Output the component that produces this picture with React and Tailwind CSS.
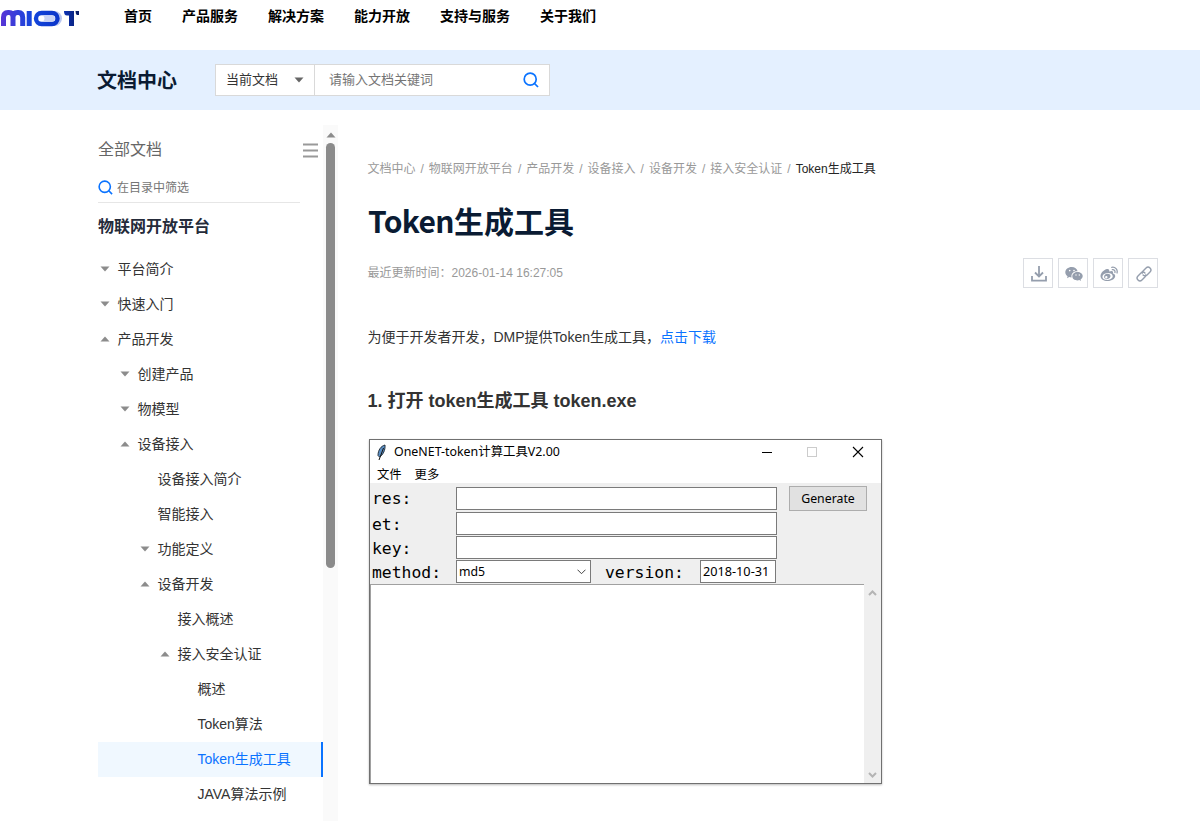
import React from 'react';

const NAV = ['首页', '产品服务', '解决方案', '能力开放', '支持与服务', '关于我们'];
const CRUMBS = ['文档中心', '物联网开放平台', '产品开发', '设备接入', '设备开发', '接入安全认证'];
const TREE = [
  ['平台简介', 0, 'down'],
  ['快速入门', 0, 'down'],
  ['产品开发', 0, 'up'],
  ['创建产品', 1, 'down'],
  ['物模型', 1, 'down'],
  ['设备接入', 1, 'up'],
  ['设备接入简介', 2, ''],
  ['智能接入', 2, ''],
  ['功能定义', 2, 'down'],
  ['设备开发', 2, 'up'],
  ['接入概述', 3, ''],
  ['接入安全认证', 3, 'up'],
  ['概述', 4, ''],
  ['Token算法', 4, ''],
  ['Token生成工具', 4, ''],
  ['JAVA算法示例', 4, ''],
];
const INDENT = ['pl-0', 'pl-5', 'pl-10', 'pl-[60px]', 'pl-20'];

function Logo() {
  return (
    <svg width="80" height="18" viewBox="0 0 80 18" fill="none" className="block">
      <defs>
        <linearGradient id="lg" x1="0" y1="0" x2="80" y2="0" gradientUnits="userSpaceOnUse">
          <stop offset="0" stopColor="#5a35d6" />
          <stop offset="0.4" stopColor="#1446dc" />
          <stop offset="0.75" stopColor="#0b35c8" />
          <stop offset="1" stopColor="#0a1f6a" />
        </linearGradient>
      </defs>
      <path d="M3.500 17V8.500Q3.500 3.500 8 3.500H9Q13 3.500 13 8V17M13 8Q13 3.500 17.500 3.500H18.500Q22.700 3.500 22.700 8.500V17M29.200 2V17" stroke="url(#lg)" strokeWidth="5" />
      <rect x="43" y="2" width="19" height="15" rx="7.500" fill="#b9c6f0" />
      <rect x="36" y="4" width="21.500" height="11" rx="5.500" fill="#fff" stroke="url(#lg)" strokeWidth="4.400" />
      <path d="M43 6.500H52C56 6.500 56 12.500 52 12.500H43Q46 9.500 43 6.500Z" fill="#c9d3f5" />
      <path d="M64 2H74V17H69V6.500H67Q64 6.500 64 2Z" fill="url(#lg)" />
      <path d="M75.500 2H79V6H77Q75.500 5 75.500 2Z" fill="#0a1f6a" />
    </svg>
  );
}

function Search({ size }) {
  return (
    <svg width={size} height={size} viewBox="0 0 16 16" fill="none" stroke="#0a73ff" strokeWidth="1.700">
      <circle cx="7.200" cy="7.200" r="6" />
      <path d="M11.500 11.500L15 15" />
    </svg>
  );
}

function Caret({ dir, color = '#8c8c8c' }) {
  return (
    <svg width="10" height="6" viewBox="0 0 10 6" className="block">
      <path d={dir === 'up' ? 'M0.500 5.500L5 0.500L9.500 5.500Z' : 'M0.500 0.500L5 5.500L9.500 0.500Z'} fill={color} />
    </svg>
  );
}

function ShareButton({ children }) {
  return <div className="flex h-[30px] w-[30px] items-center justify-center border border-[#dcdee3] text-[#959ead]">{children}</div>;
}

function Share() {
  return (
    <div className="flex gap-[5px]">
      <ShareButton>
        <svg width="18" height="18" viewBox="0 0 18 18" fill="none" stroke="currentColor" strokeWidth="1.800" className="mt-0.5 ml-0.5">
          <path d="M9 1V11M5 7.500L9 11.500L13 7.500M2 11V15.700H16V11" />
        </svg>
      </ShareButton>
      <ShareButton>
        <svg width="18" height="16" viewBox="0 0 18 16" fill="currentColor" className="mt-px ml-0.5">
          <path d="M6.800 1C3 1 .3 3.300.3 6.200c0 1.700.9 3.100 2.300 4.100L2 12.200l2.200-1.100c.8.200 1.500.3 2.400.3-.9-3.600 2-6.400 6-6.200C12 2.700 9.800 1 6.800 1Z" />
          <path d="M12.500 5.900c-3 0-5.200 1.900-5.200 4.300s2.200 4.200 5.200 4.200c.6 0 1.200-.1 1.800-.3l1.700 1-.4-1.600c1.300-.8 2.100-2 2.100-3.400 0-2.300-2.300-4.200-5.200-4.200Z" />
          <g fill="#fff"><circle cx="4.700" cy="4.600" r=".8" /><circle cx="9" cy="4.600" r=".8" /><circle cx="11" cy="9" r=".7" /><circle cx="14.300" cy="9" r=".7" /></g>
        </svg>
      </ShareButton>
      <ShareButton>
        <svg width="18" height="16" viewBox="0 0 18 16" fill="none" stroke="currentColor" className="mt-px ml-0.5">
          <path fill="currentColor" fillRule="evenodd" stroke="none" d="M7 3C4 3.500.5 7 .5 10c0 3 3.200 5 7 5 4.600 0 7.700-2.600 7.700-5 0-1.500-1.200-2.300-2.300-2.600.7-2-.5-3-3.700-1.800C9.600 3.800 8.800 2.700 7 3ZM7.300 7c2.900-.3 5.200 1 5.400 3s-2 3.600-4.900 3.900c-2.800.2-5.200-1-5.400-3C2.300 9 4.500 7.300 7.300 7Z" />
          <path fill="currentColor" fillRule="evenodd" stroke="none" d="M7.300 7.800c-2 .2-3.400 1.600-3.200 3.200.2 1.500 1.700 2.400 3.500 2.100 1.900-.3 3.100-1.800 2.900-3.300-.3-1.400-1.500-2.200-3.200-2ZM6.300 10a1.200 1.200 0 1 1 0 2.400 1.200 1.200 0 0 1 0-2.400Z" />
          <path strokeWidth="1.300" strokeLinecap="round" d="M11.800 1.300C15.200.6 18 3.600 17 7M12.300 3.700C14.200 3.300 15.400 4.900 14.900 6.500" />
        </svg>
      </ShareButton>
      <ShareButton>
        <svg width="16" height="16" viewBox="0 0 16 16" fill="none" stroke="currentColor" strokeWidth="1.400" strokeLinecap="round" className="mt-px ml-0.5">
          <g transform="rotate(-45 8 8)">
            <path d="M8.600 9.800A2.800 2.800 0 0 1 6.500 10.800H2.300A2.800 2.800 0 0 1 2.300 5.200H6.500A2.800 2.800 0 0 1 9.300 8" />
            <path d="M7.400 6.200A2.800 2.800 0 0 1 9.500 5.200H13.700A2.800 2.800 0 0 1 13.700 10.800H9.500A2.800 2.800 0 0 1 6.700 8" />
          </g>
        </svg>
      </ShareButton>
    </div>
  );
}

const FIELD = 'h-[23px] border border-[#7a7a7a] bg-white';
const LABEL = 'w-[86px] pl-0.5 font-["DejaVu_Sans_Mono",monospace] text-[16.4px] leading-[23px] text-black';

function ToolWindow() {
  return (
    <div className="h-[345px] w-[513px] border border-[#707070] bg-white font-['Noto_Sans','Noto_Sans_CJK_SC',sans-serif] text-[12.300px] text-black shadow-[0_1px_2px_#bbb]">
      <div className="flex h-6 items-center pr-[17px] pl-1.5">
        <svg width="11" height="17" viewBox="0 0 11 17" className="mr-[7px]">
          <path d="M9 1C5 2 2 6 2 11.500L3.500 13C7 11 9.500 6 9 1Z" fill="#5c8fc4" stroke="#16222e" strokeWidth="0.900" />
          <path d="M7.500 4L3 16" stroke="#111" strokeWidth="1" />
        </svg>
        <span className="flex-1 text-[12.400px]">OneNET-token计算工具V2.00</span>
        <svg width="102" height="12" viewBox="0 0 102 12" fill="none">
          <path d="M0 6.500H10" stroke="#000" />
          <rect x="45.500" y="1.500" width="9" height="9" stroke="#ccc" />
          <path d="M91 1L101 11M101 1L91 11" stroke="#000" strokeWidth="1.100" />
        </svg>
      </div>
      <div className="flex h-[19px] items-center gap-[13px] pt-1 pl-[7px]"><span>文件</span><span>更多</span></div>
      <div className="flex h-[101px] bg-[#efefef] pt-1">
        <div className="flex w-[407px] flex-col gap-px">
          <div className="mb-px flex h-[23px]"><span className={LABEL}>res:</span><div className={FIELD + ' flex-1'} /></div>
          <div className="flex h-[23px]"><span className={LABEL + ' pt-px'}>et:</span><div className={FIELD + ' flex-1'} /></div>
          <div className="flex h-[23px]"><span className={LABEL + ' pt-px'}>key:</span><div className={FIELD + ' flex-1'} /></div>
          <div className="flex h-[23px]">
            <span className={LABEL + ' pt-px'}>method:</span>
            <div className={FIELD + ' flex w-[135px] items-center justify-between pr-1 pl-0.5'}>
              <span className="pt-0.5">md5</span>
              <svg width="9" height="6" viewBox="0 0 9 6" fill="none" stroke="#444"><path d="M.5 .7L4.500 4.700L8.500 .7" /></svg>
            </div>
            <span className="w-[109px] pt-px pl-3.5 font-['DejaVu_Sans_Mono',monospace] text-[16.4px] leading-[23px]">version:</span>
            <div className={FIELD + ' w-[76px] pl-0.5 text-[12.700px] leading-[21px]'}>2018-10-31</div>
          </div>
        </div>
        <div className="-mt-px ml-3 flex h-[25px] w-[78px] items-center justify-center border border-[#adadad] bg-[#e1e1e1] pt-0.5 text-[12.300px]">Generate</div>
      </div>
      <div className="flex h-[199px]">
        <div className="flex-1 border-t border-l border-[#a0a0a0]" />
        <div className="flex w-[17px] flex-col items-center justify-between bg-[#efefef] pt-1.5 pb-[5px]">
          <svg width="9" height="6" viewBox="0 0 9 6" fill="none" stroke="#b4b4b4" strokeWidth="2"><path d="M1 5L4.500 1.500L8 5" /></svg>
          <svg width="9" height="6" viewBox="0 0 9 6" fill="none" stroke="#b4b4b4" strokeWidth="2"><path d="M1 1L4.500 4.500L8 1" /></svg>
        </div>
      </div>
    </div>
  );
}

function Sidebar() {
  return (
    <aside className="flex w-60 shrink-0">
      <div className="w-[225px]">
        <div className="flex h-20 items-center justify-between pr-[5px] text-[16px] text-[#666]">
          全部文档
          <svg width="15" height="15" viewBox="0 0 15 15" stroke="#999" strokeWidth="1.800"><path d="M0 1.500H15M0 7.500H15M0 13.500H15" /></svg>
        </div>
        <div className="-mt-[11px] flex h-[24px] w-[202px] items-center gap-1 border-b border-[#e6e6e6] pb-[6px] text-[12px] text-[#757575]"><Search size={15} /><span className="pt-px">在目录中筛选</span></div>
        <div className="mt-[9px] flex h-[29px] items-center text-[16px] font-bold text-[#252b3a]">物联网开放平台</div>
        <div className="mt-[11px]">
          {TREE.map(([name, depth, dir]) => (
            <div key={name} className={'flex h-[35px] items-center text-[14px] ' + INDENT[depth] + (name === 'Token生成工具' ? ' border-r-2 border-[#0a73ff] bg-[#f0f8ff] text-[#0a73ff]' : ' text-[#333]')}>
              <span className="w-[19.500px] pb-px pl-0.5">{dir && <Caret dir={dir} />}</span>
              <span>{name}</span>
            </div>
          ))}
        </div>
      </div>
      <div className="mt-[15px] flex w-[15px] flex-col items-center bg-[#fafafa] pt-[7px]">
        <Caret dir="up" />
        <div className="mt-[5px] h-[425px] w-[9px] rounded-full bg-[#8b8b8b]" />
      </div>
    </aside>
  );
}

export default function App() {
  return (
    <div className="h-[821px] w-[1200px] overflow-hidden bg-white font-['Liberation_Sans','Noto_Sans_CJK_SC',sans-serif]">
      <header className="flex h-[50px] items-start">
        <div className="w-[124px] pt-[9px]"><Logo /></div>
        <nav className="flex h-8 items-center gap-[30px] text-[14px] font-bold text-black">
          {NAV.map((n) => <span key={n}>{n}</span>)}
        </nav>
      </header>
      <div className="flex h-[60px] items-center bg-[#e4f0ff] pl-[97px]">
        <h1 className="w-[118px] pt-px text-[20px] font-bold text-[#0a1b33]">文档中心</h1>
        <div className="flex h-8 w-[335px] border border-[#d9d9d9] bg-white text-[13px]">
          <div className="flex w-[99px] items-center justify-between border-r border-[#d9d9d9] pr-2.5 pl-2.5 text-[#333]">当前文档<Caret dir="down" color="#666" /></div>
          <div className="flex flex-1 items-center justify-between pr-2.5 pl-3.5 text-[#757575]">请输入文档关键词<Search size={16} /></div>
        </div>
      </div>
      <div className="flex h-[711px] pl-[98px]">
        <Sidebar />
        <main className="flex flex-1 flex-col pr-[42px] pl-[29.500px]">
          <div className="mt-[49px] flex h-5 items-center text-[12px] text-[#999]">
            {CRUMBS.map((c) => <React.Fragment key={c}><span>{c}</span><span className="mx-[5px]">/</span></React.Fragment>)}
            <span className="text-[#252525]">Token生成工具</span>
          </div>
          <h2 className="mt-[18px] h-[46px] pl-[0.500px] font-['Noto_Sans_CJK_SC',sans-serif] text-[30px] leading-[46px] font-bold text-[#0a1b33]"><span className="tracking-[-0.6px]">Token</span>生成工具</h2>
          <div className="mt-[15px] flex h-[30px] items-center justify-between text-[12px] text-[#999]"><span>最近更新时间：2026-01-14 16:27:05</span><Share /></div>
          <p className="mt-[39px] h-5 text-[14px] leading-5 text-[#333]">为便于开发者开发，DMP提供Token生成工具，<a className="text-[#0a73ff]">点击下载</a></p>
          <h3 className="mt-[40px] mb-6 h-7 text-[18px] leading-7 font-bold text-[#333]">1. 打开 token生成工具 token.exe</h3>
          <div className="pl-[1.500px]"><ToolWindow /></div>
        </main>
      </div>
    </div>
  );
}
